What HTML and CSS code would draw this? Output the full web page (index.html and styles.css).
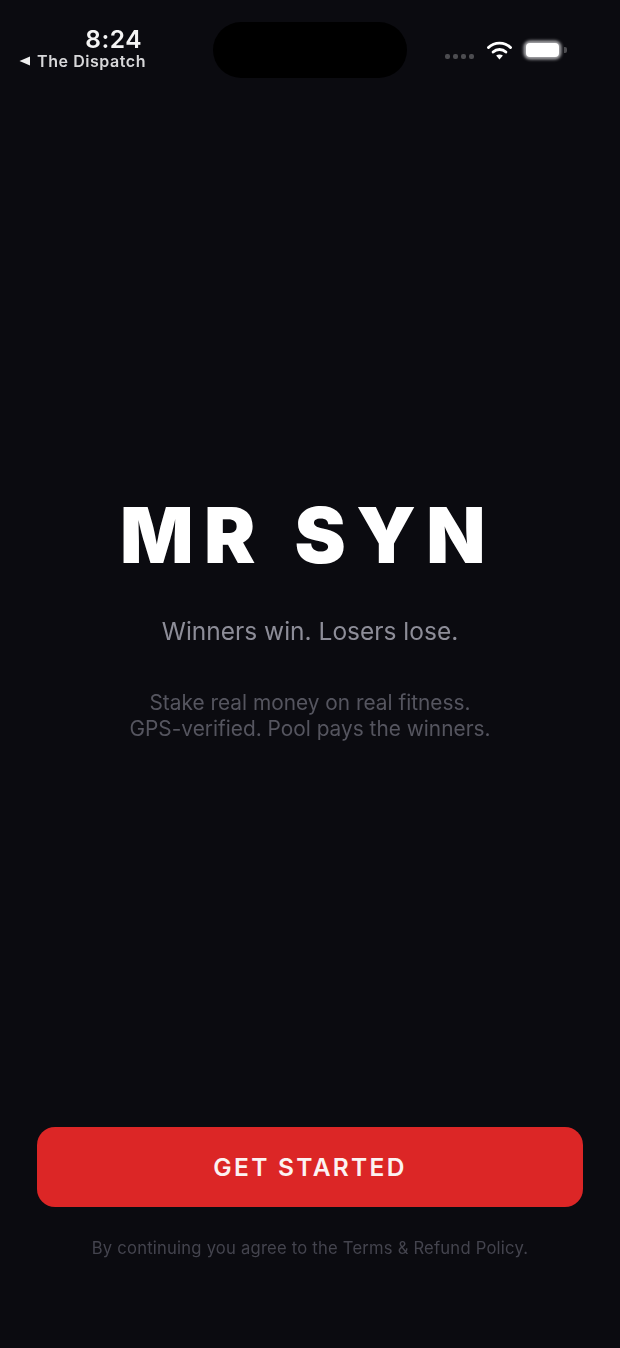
FILE: index.html
```html
<!DOCTYPE html>
<html lang="en">
<head>
<meta charset="utf-8">
<title>MR SYN</title>
<link rel="stylesheet" href="styles.css">
</head>
<body>
<div class="screen">
  <header class="status">
    <div class="status-left">
      <div class="time">8:24</div>
      <div class="back"><svg class="back-arrow" viewBox="0 0 12 10"><path d="M0.5 5 11 0.5V9.5Z"/></svg><span>The Dispatch</span></div>
    </div>
    <div class="island"></div>
    <div class="status-right">
      <div class="signal"><i></i><i></i><i></i><i></i></div>
      <svg class="wifi" viewBox="0 0 26 20"><path class="arc" d="M2 7.5C8 1.6 18 1.6 24 7.5"/><path class="arc" d="M6.6 12C10.2 8.6 15.8 8.6 19.4 12"/><path class="dot" d="M13 19.5 9.6 15.6C11.6 14 14.4 14 16.4 15.6Z"/></svg>
      <div class="battery"><div class="battery-fill"></div><div class="battery-cap"></div></div>
    </div>
  </header>
  <main class="hero">
    <h1 class="title">MR SYN</h1>
    <p class="tagline">Winners win. Losers lose.</p>
    <p class="desc">Stake real money on real fitness.<br>GPS-verified. Pool pays the winners.</p>
  </main>
  <footer class="foot">
    <button class="cta">GET STARTED</button>
    <p class="legal">By continuing you agree to the Terms &amp; Refund Policy.</p>
  </footer>
</div>
</body>
</html>
```
FILE: styles.css
```css
* { box-sizing: border-box; margin: 0; padding: 0; }
html, body { width: 620px; height: 1348px; overflow: hidden; background: #0b0b10; }
body { font-family: Inter, "Liberation Sans", sans-serif; color: #fff; }
.screen { width: 620px; height: 1348px; display: flex; flex-direction: column; background: #0b0b10; }

.status { height: 78px; display: flex; justify-content: space-between; align-items: flex-start; padding-top: 22px; flex: none; }
.status-left { width: 213px; display: flex; flex-direction: column; align-items: flex-end; padding-right: 67px; }
.time { font-size: 24.5px; font-weight: 600; line-height: 28px; height: 28px; margin-top: 3px; letter-spacing: 0.5px; color: #f4f4f4; padding-right: 4px; filter: blur(0.5px); }
.back { display: flex; align-items: center; gap: 6px; font-size: 16px; font-weight: 600; line-height: 16px; letter-spacing: 0.55px; color: #d8d8da; filter: blur(0.5px); }
.back-arrow { width: 12px; height: 10px; fill: #f0f0f0; }
.island { width: 194px; height: 56px; background: #000; border-radius: 28px; flex: none; }
.status-right { width: 213px; display: flex; align-items: center; padding: 18px 0 0 38px; filter: blur(0.6px); }
.signal { display: flex; gap: 3px; margin-top: 13px; }
.signal i { width: 5px; height: 5px; border-radius: 2px; background: #4c4c50; }
.wifi { width: 27px; height: 20px; margin-left: 12px; }
.wifi .arc { fill: none; stroke: #fff; stroke-width: 2.9px; stroke-linecap: round; }
.wifi .dot { fill: #fff; }
.battery { display: flex; align-items: center; margin-left: 13px; }
.battery-fill { width: 33px; height: 14px; background: #fff; border-radius: 4px; box-shadow: 0 0 3px 2.5px #a5a5a8; }
.battery-cap { width: 3px; height: 6px; margin-left: 5px; background: #4c4c50; border-radius: 0 2px 2px 0; }

.hero { flex: 1; display: flex; flex-direction: column; align-items: center; padding-top: 410px; }
.title { font-size: 77px; font-weight: 900; line-height: 94px; letter-spacing: 10.4px; word-spacing: 3px; margin-right: 4px; color: #fff; white-space: nowrap; filter: blur(0.5px); }
.tagline { margin-top: 33px; font-size: 24.5px; font-weight: 400; line-height: 32px; color: #8d8d98; filter: blur(0.5px); }
.desc { margin-top: 43px; font-size: 20.85px; line-height: 26px; text-align: center; color: #55555f; filter: blur(0.6px); }

.foot { flex: none; padding: 0 37px 89px; display: flex; flex-direction: column; align-items: center; }
.cta { width: 546px; height: 80px; border: 0; border-radius: 18px; background: #dc2626; color: #fcf2f2; font-family: inherit; font-size: 24.5px; font-weight: 600; letter-spacing: 2.3px; }
.legal { margin-top: 30px; font-size: 16.6px; line-height: 22px; color: #44444e; letter-spacing: 0.22px; white-space: nowrap; filter: blur(0.6px); }
```
